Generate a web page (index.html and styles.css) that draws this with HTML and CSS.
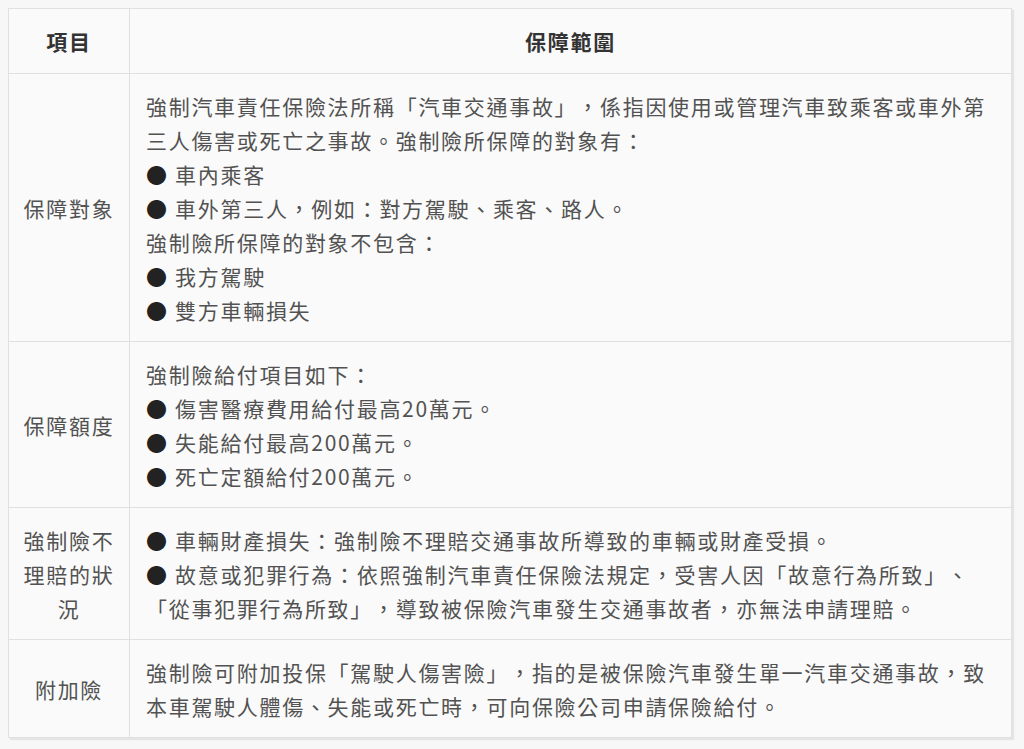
FILE: index.html
```html
<!DOCTYPE html>
<html lang="zh-Hant">
<head>
<meta charset="utf-8">
<link rel="stylesheet" href="styles.css">
</head>
<body>
<table class="tbl">
  <thead>
    <tr><th class="c1">項目</th><th class="c2">保障範圍</th></tr>
  </thead>
  <tbody>
    <tr>
      <td class="c1">保障對象</td>
      <td class="c2">強制汽車責任保險法所稱「汽車交通事故」，係指因使用或管理汽車致乘客或車外第三人傷害或死亡之事故。強制險所保障的對象有：<br><span class="b">●</span> 車內乘客<br><span class="b">●</span> 車外第三人，例如：對方駕駛、乘客、路人。<br>強制險所保障的對象不包含：<br><span class="b">●</span> 我方駕駛<br><span class="b">●</span> 雙方車輛損失</td>
    </tr>
    <tr>
      <td class="c1">保障額度</td>
      <td class="c2">強制險給付項目如下：<br><span class="b">●</span> 傷害醫療費用給付最高20萬元。<br><span class="b">●</span> 失能給付最高200萬元。<br><span class="b">●</span> 死亡定額給付200萬元。</td>
    </tr>
    <tr>
      <td class="c1">強制險不理賠的狀況</td>
      <td class="c2"><span class="b">●</span> 車輛財產損失：強制險不理賠交通事故所導致的車輛或財產受損。<br><span class="b">●</span> 故意或犯罪行為：依照強制汽車責任保險法規定，受害人因「故意行為所致」、「從事犯罪行為所致」，導致被保險汽車發生交通事故者，亦無法申請理賠。</td>
    </tr>
    <tr>
      <td class="c1">附加險</td>
      <td class="c2">強制險可附加投保「駕駛人傷害險」，指的是被保險汽車發生單一汽車交通事故，致本車駕駛人體傷、失能或死亡時，可向保險公司申請保險給付。</td>
    </tr>
  </tbody>
</table>
</body>
</html>
```

FILE: styles.css
```css
html, body {
  margin: 0;
  padding: 0;
  background: #f7f7f7;
}
body {
  padding: 8px;
  font-family: "Noto Sans CJK TC", "Noto Sans", sans-serif;
}
.tbl {
  width: 1004px;
  border-collapse: collapse;
  background: #fafafa;
  box-shadow: 2px 2px 1px rgba(0, 0, 0, 0.07);
  font-size: 21px;
  letter-spacing: 1.7px;
  line-height: 34px;
  color: #525252;
  text-spacing-trim: space-all;
}
.tbl th, .tbl td {
  border: 1px solid #e0e0e0;
  vertical-align: middle;
}
.tbl th {
  padding: 15px 16px;
  font-weight: 700;
  color: #333;
  text-align: center;
}
.tbl td {
  padding: 15px 16px 14px;
}
.tbl th.c1 {
  width: 100px;
  padding: 15px 10px;
}
.tbl td.c1 {
  text-align: center;
  padding-left: 10px;
  padding-right: 10px;
}
.tbl td.c2 {
  text-align: left;
}
.b {
  color: #222;
}
```
